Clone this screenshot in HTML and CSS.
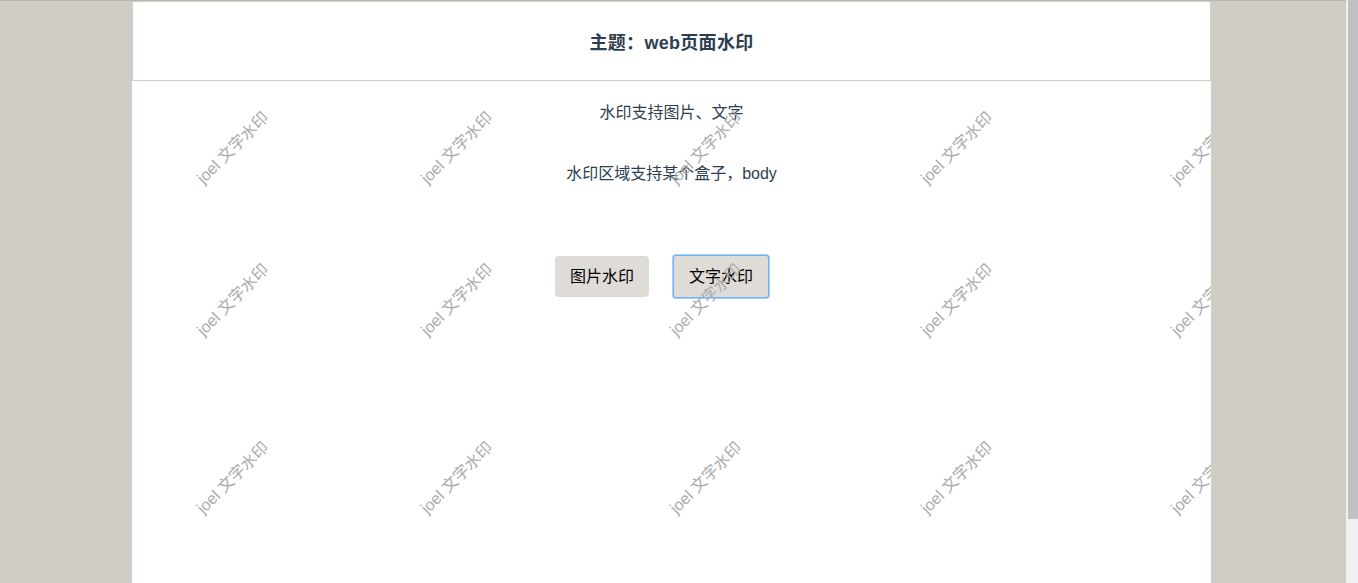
FILE: index.html
```html
<!DOCTYPE html>
<html lang="zh-CN">
<head>
<meta charset="utf-8">
<title>web页面水印</title>
<link rel="stylesheet" href="styles.css">
</head>
<body>
<div class="topline"></div>
<div class="page">
  <header class="header">
    <h1 class="title">主题：web页面水印</h1>
  </header>
  <main class="content">
    <p class="desc">水印支持图片、文字</p>
    <p class="desc">水印区域支持某个盒子，body</p>
    <div class="actions">
      <button class="btn">图片水印</button>
      <button class="btn btn-focus">文字水印</button>
    </div>
    <div class="wm-layer" aria-hidden="true">
      <span class="wm r1 c1">joel 文字水印</span>
      <span class="wm r1 c2">joel 文字水印</span>
      <span class="wm r1 c3">joel 文字水印</span>
      <span class="wm r1 c4">joel 文字水印</span>
      <span class="wm r1 c5">joel 文字水印</span>
      <span class="wm r2 c1">joel 文字水印</span>
      <span class="wm r2 c2">joel 文字水印</span>
      <span class="wm r2 c3">joel 文字水印</span>
      <span class="wm r2 c4">joel 文字水印</span>
      <span class="wm r2 c5">joel 文字水印</span>
      <span class="wm r3 c1">joel 文字水印</span>
      <span class="wm r3 c2">joel 文字水印</span>
      <span class="wm r3 c3">joel 文字水印</span>
      <span class="wm r3 c4">joel 文字水印</span>
      <span class="wm r3 c5">joel 文字水印</span>
    </div>
  </main>
</div>
<div class="fake-scrollbar" aria-hidden="true">
  <div class="fake-thumb"></div>
</div>
</body>
</html>
```
FILE: styles.css
```css
html {
  background: #d0cdc7;
}
body {
  margin: 0;
  background: #d0cdc7;
  font-family: "Liberation Sans", "Noto Sans CJK SC", sans-serif;
  color: #2c3e50;
}
.topline {
  height: 1px;
  background: #bab5b0;
}
.page {
  width: 1079px;
  margin-left: 132px;
  background: #fff;
}
.header {
  height: 78px;
  border: 1px solid #d0cdc7;
  display: flex;
  align-items: center;
  justify-content: center;
}
.title {
  margin: 3px 0 0;
  font-size: 18px;
  font-weight: bold;
  letter-spacing: 0.3px;
  color: #2c3e50;
  line-height: 24px;
}
.content {
  position: relative;
  overflow: hidden;
  height: 574px;
  padding-top: 21px;
  box-sizing: border-box;
  text-align: center;
}
.desc {
  margin: 0 0 40px;
  font-size: 16px;
  line-height: 21px;
}
.actions {
  display: flex;
  justify-content: center;
  align-items: center;
  gap: 4px;
  margin-top: 72px;
}
.btn {
  font-family: "Liberation Sans", "Noto Sans CJK SC", sans-serif;
  font-size: 16px;
  line-height: 21px;
  color: #000;
  background: #dfdcd8;
  border: none;
  border-radius: 4px;
  padding: 10px 15px;
  margin-right: 20px;
}
.btn-focus {
  border-radius: 2px;
  box-shadow: 0 0 0 1px #6cb2f7, 0 0 0 2px #a9d0f8;
  margin-left: 1px;
}
.wm-layer {
  position: absolute;
  inset: 0;
  pointer-events: none;
}
.wm {
  position: absolute;
  white-space: nowrap;
  font-size: 16px;
  line-height: 18px;
  color: #ababab;
  transform: translate(-50%, -50%) rotate(-45deg);
}
.r1 { top: 67px; }
.r2 { top: 219px; }
.r3 { top: 397px; }
.c1 { left: 101px; }
.c2 { left: 325px; }
.c3 { left: 574px; }
.c4 { left: 825px; }
.c5 { left: 1075px; }
.fake-scrollbar {
  position: fixed;
  top: 0;
  right: 0;
  width: 12px;
  height: 100vh;
  background: #f1f1f1;
}
.fake-thumb {
  margin-left: 2px;
  height: 519px;
  background: #c1c1c1;
}
```
